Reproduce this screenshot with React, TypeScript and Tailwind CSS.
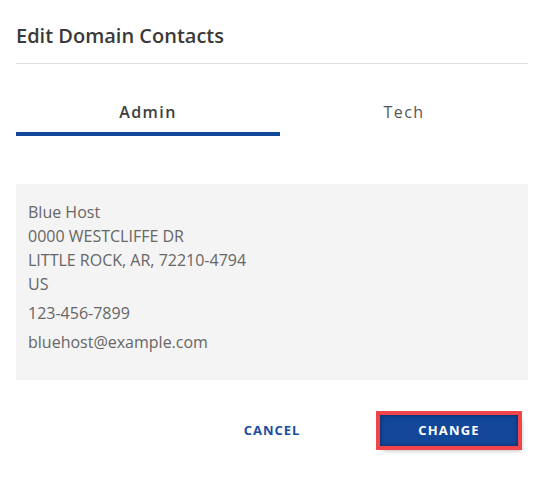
import React from "react";

const contact = {
  name: "Blue Host",
  street: "0000 WESTCLIFFE DR",
  city: "LITTLE ROCK, AR, 72210-4794",
  country: "US",
  phone: "123-456-7899",
  email: "bluehost@example.com",
};

export default function App() {
  return (
    <div
      className="w-[544px] bg-white px-4 pt-[22px] text-[#333]"
      style={{ fontFamily: '"Open Sans", "Liberation Sans", sans-serif' }}
    >
      <h2 className="text-[20px] font-semibold leading-7 text-[#3a3a3a]">
        Edit Domain Contacts
      </h2>
      <div className="mt-[13px] h-px bg-[#e0e0e0]" />

      <div className="mt-[36px] flex">
        <button className="w-[264px] border-b-4 border-[#13479a] pb-2 text-base font-semibold leading-6 tracking-[1.4px] text-[#3d3d3d]">
          Admin
        </button>
        <button className="flex-1 border-b-4 border-transparent pb-2 text-base leading-6 tracking-[1.4px] text-[#555]">
          Tech
        </button>
      </div>

      <div className="mt-12 bg-[#f4f4f4] px-3 pb-[26px] pt-4 text-base leading-6 text-[#666]">
        <div>
          <p>{contact.name}</p>
          <p>{contact.street}</p>
          <p>{contact.city}</p>
          <p>{contact.country}</p>
        </div>
        <p className="mt-[5px]">{contact.phone}</p>
        <p className="mt-[5px]">{contact.email}</p>
      </div>

      <div className="mt-[35px] flex items-center justify-end gap-[39px] pr-[10px]">
        <button className="h-[31px] w-[138px] text-[13px] font-bold tracking-[1px] text-[#1b4d9e]">
          CANCEL
        </button>
        <button className="h-[31px] w-[138px] bg-[#13479a] text-[13px] font-bold tracking-[1.2px] text-white shadow-[inset_0_0_4px_rgba(0,0,0,0.45),3px_4px_5px_rgba(0,0,0,0.35)] outline outline-4 outline-[#f2454b]">
          CHANGE
        </button>
      </div>
      <div className="h-[31px]" />
    </div>
  );
}
